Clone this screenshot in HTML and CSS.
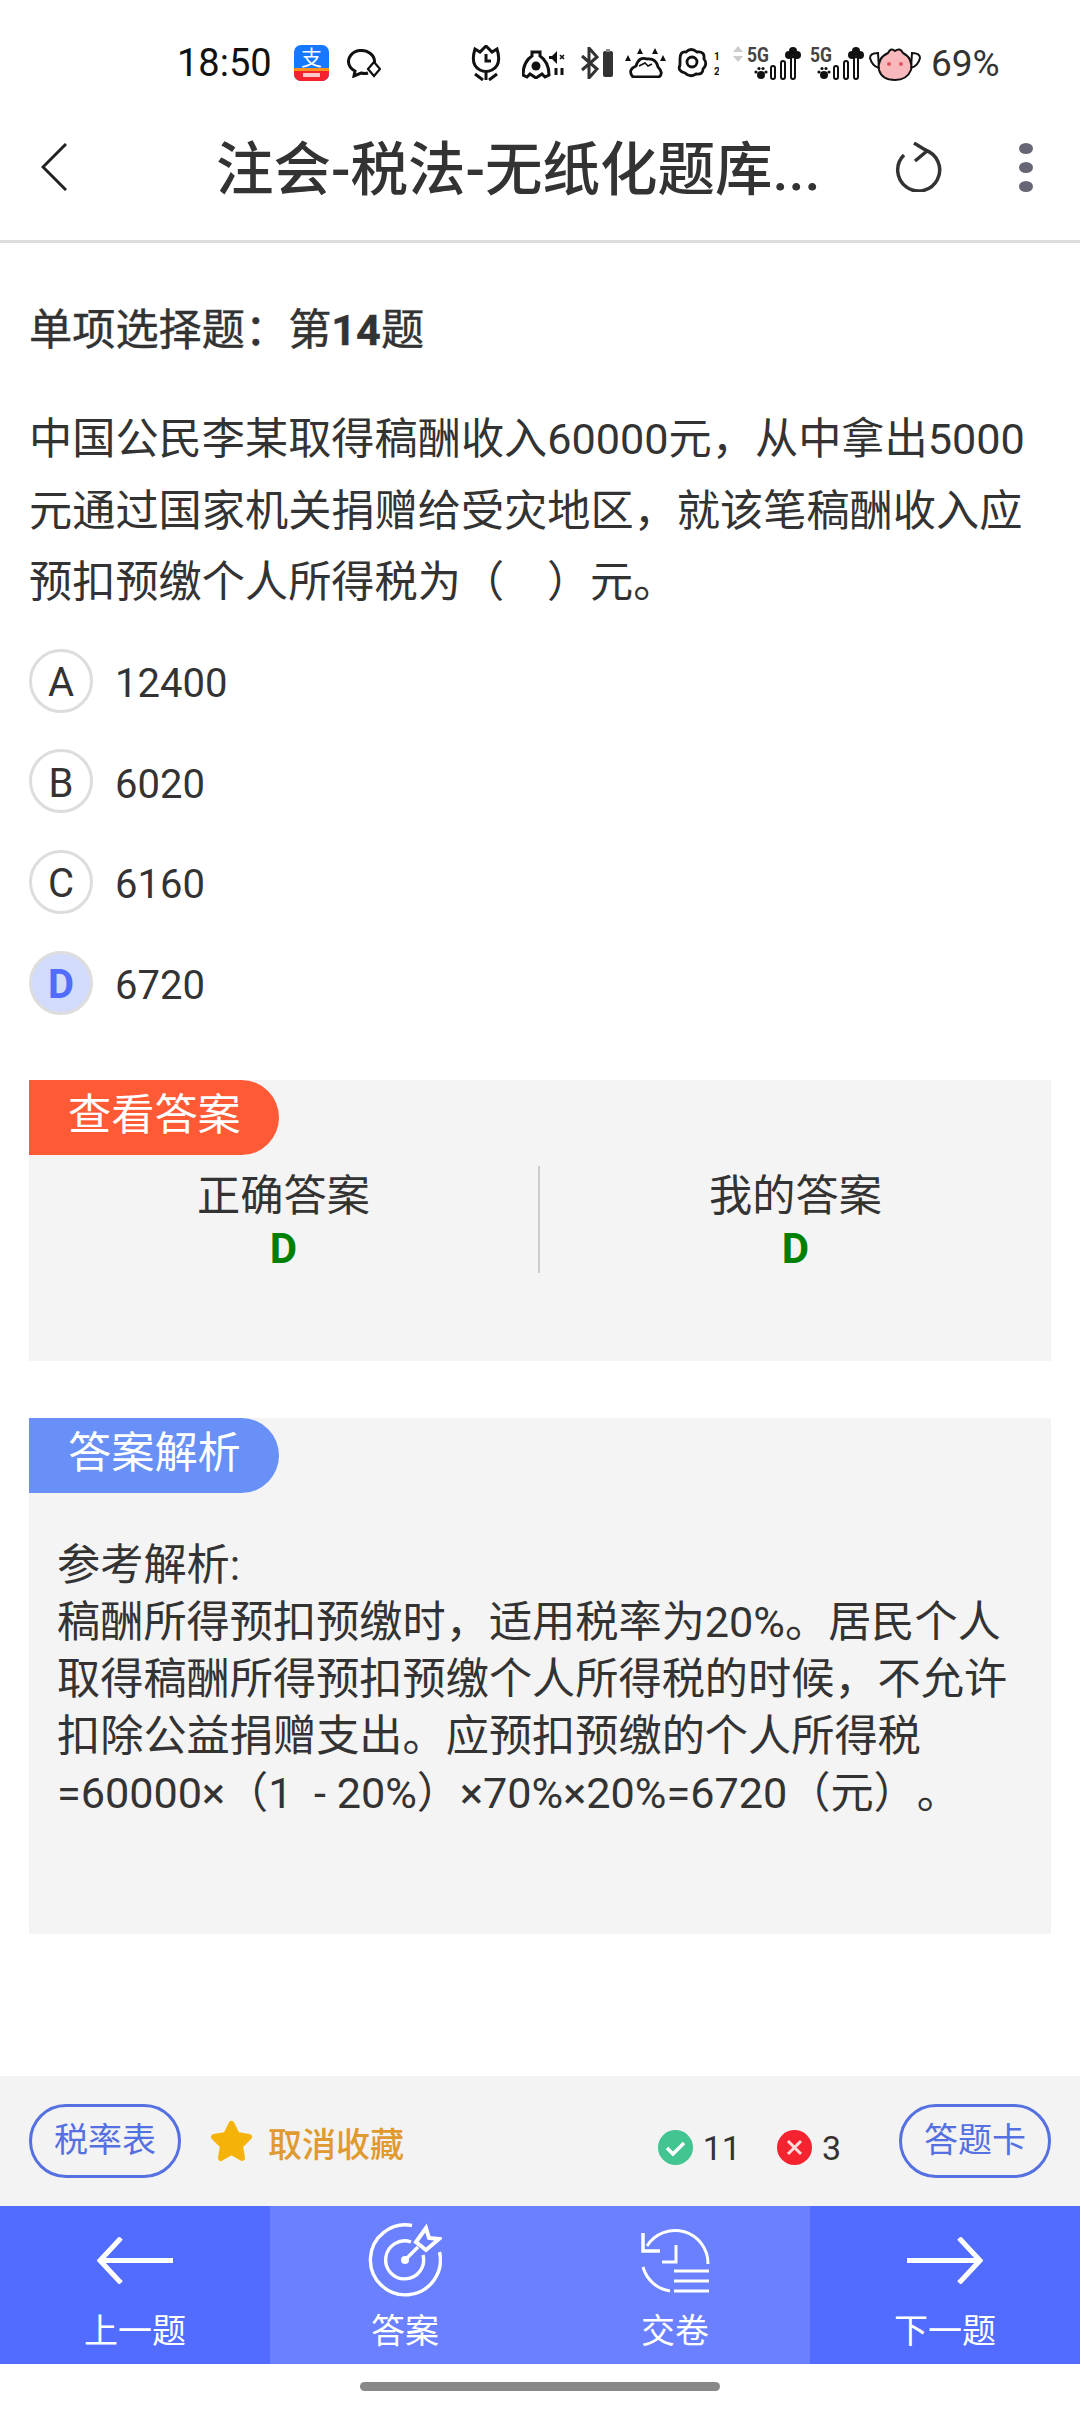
FILE: index.html
```html
<!DOCTYPE html>
<html lang="zh-CN">
<head>
    <meta charset="UTF-8">
    <meta name="viewport" content="width=device-width, initial-scale=1.0">
    <title>注会-税法-无纸化题库</title>
    <link rel="stylesheet" href="styles.css">
</head>
<body>

<div class="statusbar">
    <span class="clock">18:50</span>
    <svg class="ic-alipay" width="35" height="52" viewBox="0 -8 35 52">
        <rect width="35" height="36" rx="7" fill="#1677ff"/>
        <path d="M0 23h35v6a7 7 0 0 1-7 7H7a7 7 0 0 1-7-7z" fill="#f5222d"/>
        <path d="M0 23h35v3H0z" fill="#f7941d"/>
        <text x="17.5" y="20" font-size="21" fill="#fff" text-anchor="middle" font-family="Noto Sans CJK SC">支</text>
        <rect x="9" y="28" width="17" height="4" fill="#ffc9c9"/>
    </svg>
    <svg class="ic-msg" width="34" height="29" viewBox="0 0 34 29" fill="none" stroke="#111" stroke-width="3">
        <path d="M24 20 A13 11 0 1 0 8 22 L7 27 L14 24 Q18 25 21 24"/>
        <path d="M27 13 L33 20 L27 27 L21 20 Z" fill="#fff" stroke-width="2.2"/>
    </svg>
    <svg class="ic-tulip" width="32" height="36" viewBox="0 0 32 36" fill="none" stroke="#111" stroke-width="3">
        <path d="M5 4 L10 7 L16 1 L22 7 L27 4 Q32 20 22 25 Q16 28 10 25 Q0 20 5 4 Z"/>
        <path d="M16 9 V16 H21" stroke-width="3"/>
        <path d="M5 29 L13 35 M27 29 L19 35 M16 27 V35"/>
    </svg>
    <svg class="ic-bag" width="43" height="32" viewBox="0 0 43 32" fill="none" stroke="#111" stroke-width="3">
        <path d="M10 5 H18 L18 9 Q27 15 27 28 L23 30 L20 27 L14 31 L8 27 L5 30 L1 28 Q1 15 10 9 Z"/>
        <circle cx="14" cy="19" r="4.5" fill="#111" stroke="none"/>
        <path d="M27 9 H30 L35 4 V17 L30 12 H27 Z" fill="#111" stroke="none"/>
        <path d="M38 8 L42 12 M42 8 L38 12" stroke-width="1.6"/>
        <path d="M34 21 V28 M40 21 V28" stroke-width="3"/>
    </svg>
    <svg class="ic-bt" width="33" height="32" viewBox="0 0 33 32" fill="none">
        <path d="M2 9 L17 22 L9 31 V1 L17 10 L2 23" stroke="#333" stroke-width="3"/>
        <rect x="23" y="4" width="10" height="26" rx="2" fill="#333"/>
        <rect x="26" y="2" width="4" height="3" fill="#888"/>
    </svg>
    <svg class="ic-cloud" width="41" height="30" viewBox="0 0 41 30" fill="none" stroke="#111" stroke-width="2.8">
        <path d="M8 29 H34 Q39 25 33 19 Q31 10 22 11 Q14 8 11 18 Q2 22 8 29 Z"/>
        <path d="M14 18 L20 15 L23 18 L27 16" stroke-width="1.6"/>
        <path d="M15 0 L18 6 L12 6 Z M30 0 L33 6 L27 6 Z M3 7 L6 13 L0 13 Z M38 7 L41 13 L35 13 Z" fill="#111" stroke="none"/>
    </svg>
    <svg class="ic-flower" width="45" height="44" viewBox="0 -7 45 44" fill="none" stroke="#111" stroke-width="2.8">
        <path d="M6 11 Q6 3 12 4 Q17 -1 23 4 Q31 3 30 11 Q34 16 29 21 Q29 27 22 26 Q16 30 11 25 Q3 23 6 17 Z"/>
        <circle cx="18" cy="14" r="5"/>
        <text x="40" y="12" font-size="10" fill="#111" stroke="none" font-weight="700" font-family="Roboto">1</text>
        <text x="40" y="27" font-size="10" fill="#111" stroke="none" font-weight="700" font-family="Roboto">2</text>
    </svg>
    <svg class="ic-sig1" width="68" height="46" viewBox="0 -6 68 46">
        <path d="M5 0 L10 6 H0 Z M5 16 L10 10 H0 Z" fill="#ccc"/>
        <text x="14" y="16" font-size="21" font-weight="700" fill="#444" font-family="Roboto" textLength="22" lengthAdjust="spacingAndGlyphs">5G</text>
        <g fill="#111"><circle cx="28" cy="29" r="4"/><circle cx="23" cy="26" r="1.6"/><circle cx="26" cy="22.5" r="1.6"/><circle cx="30" cy="22.5" r="1.6"/><circle cx="33" cy="26" r="1.6"/></g>
        <g fill="none" stroke="#111" stroke-width="2"><rect x="38" y="20" width="4" height="13" rx="2"/><rect x="48" y="15" width="4" height="18" rx="2"/><rect x="58" y="11" width="4" height="22" rx="2"/></g>
        <g fill="#111"><circle cx="60" cy="5" r="4"/><circle cx="56" cy="9" r="4"/><circle cx="64" cy="9" r="4"/></g>
    </svg>
    <svg class="ic-sig2" width="54" height="46" viewBox="14 -6 54 46">
        <text x="14" y="16" font-size="21" font-weight="700" fill="#444" font-family="Roboto" textLength="22" lengthAdjust="spacingAndGlyphs">5G</text>
        <g fill="#111"><circle cx="28" cy="29" r="4"/><circle cx="23" cy="26" r="1.6"/><circle cx="26" cy="22.5" r="1.6"/><circle cx="30" cy="22.5" r="1.6"/><circle cx="33" cy="26" r="1.6"/></g>
        <g fill="none" stroke="#111" stroke-width="2"><rect x="38" y="20" width="4" height="13" rx="2"/><rect x="48" y="15" width="4" height="18" rx="2"/><rect x="58" y="11" width="4" height="22" rx="2"/></g>
        <g fill="#111"><circle cx="60" cy="5" r="4"/><circle cx="56" cy="9" r="4"/><circle cx="64" cy="9" r="4"/></g>
    </svg>
    <svg class="ic-pig" width="52" height="35" viewBox="0 0 52 35" stroke="#111" stroke-width="2">
        <path d="M9 7 Q1 7 1 12 Q3 20 10 22 Z M43 7 Q51 7 51 12 Q49 20 42 22 Z" fill="#fff"/>
        <path d="M19 7 Q22 1 26 5 Q31 1 34 7 Q44 12 42 24 Q38 34 26 34 Q13 34 10 24 Q8 12 19 7 Z" fill="#f9b9bc"/>
        <circle cx="20" cy="18" r="2" fill="#e0555f" stroke="none"/>
        <circle cx="32" cy="18" r="2" fill="#e0555f" stroke="none"/>
    </svg>
    <span class="battery">69%</span>
</div>

<div class="topbar">
    <svg class="back" width="26" height="48" viewBox="0 0 26 48" fill="none" stroke="#222" stroke-width="3">
        <path d="M25 1 L2 24 L25 47"/>
    </svg>
    <div class="title">注会-税法-无纸化题库...</div>
    <svg class="refresh" width="47" height="50" viewBox="0 0 47 50" fill="none" stroke="#333" stroke-width="3.5">
        <path d="M30 8 A21 21 0 1 1 9 13"/>
        <path d="M19 1 L32 9 L20 19"/>
    </svg>
    <div class="dots"><i></i><i></i><i></i></div>
</div>

<div class="main">
    <div class="q-type">单项选择题：第<b>14</b>题</div>
    <p class="q-text">中国公民李某取得稿酬收入60000元，从中拿出5000元通过国家机关捐赠给受灾地区，就该笔稿酬收入应预扣预缴个人所得税为（&nbsp;&nbsp;&nbsp;&nbsp;）元。</p>

    <div class="options">
        <div class="option"><span class="letter">A</span><span class="val">12400</span></div>
        <div class="option"><span class="letter">B</span><span class="val">6020</span></div>
        <div class="option"><span class="letter">C</span><span class="val">6160</span></div>
        <div class="option"><span class="letter picked">D</span><span class="val">6720</span></div>
    </div>

    <div class="panel panel-answer">
        <div class="tag tag-red">查看答案</div>
        <div class="answers">
            <div class="answer">正确答案<b>D</b></div>
            <div class="answer">我的答案<b>D</b></div>
        </div>
    </div>

    <div class="panel panel-explain">
        <div class="tag tag-blue">答案解析</div>
        <p class="explain">参考解析:<br>稿酬所得预扣预缴时，适用税率为20%。居民个人取得稿酬所得预扣预缴个人所得税的时候，不允许扣除公益捐赠支出。应预扣预缴的个人所得税=60000×（1&nbsp;&nbsp;-&nbsp;20%）×70%×20%=6720（元）。</p>
    </div>
</div>

<div class="toolbar">
    <div class="chip">税率表</div>
    <svg class="star" width="43" height="42" viewBox="0 0 43 42">
        <path d="M21.5 4 L27 15 L39 17 L30 26 L32 38 L21.5 32 L11 38 L13 26 L4 17 L16 15 Z" fill="#f5b30a" stroke="#f5b30a" stroke-width="6" stroke-linejoin="round"/>
    </svg>
    <span class="fav">取消收藏</span>
    <div class="score">
        <svg width="35" height="35" viewBox="0 0 35 35">
            <circle cx="17.5" cy="17.5" r="17.5" fill="#43c592"/>
            <path d="M9 18 L15 24 L26 13" fill="none" stroke="#fff" stroke-width="3.5"/>
        </svg>
        <span class="num-right">11</span>
        <svg width="35" height="35" viewBox="0 0 35 35">
            <circle cx="17.5" cy="17.5" r="17.5" fill="#f5222f"/>
            <path d="M11 11 L24 24 M24 11 L11 24" fill="none" stroke="#fdd" stroke-width="3"/>
        </svg>
        <span class="num-wrong">3</span>
    </div>
    <div class="chip">答题卡</div>
</div>

<div class="bottomnav">
    <div class="navitem">
        <div class="navicon">
            <svg width="76" height="47" viewBox="0 0 76 47" fill="none" stroke="#fff" stroke-width="5">
                <path d="M76 23.5 H3 M24 1 L3 23.5 L24 46"/>
            </svg>
        </div>
        上一题
    </div>
    <div class="navitem light">
        <div class="navicon">
            <svg width="74" height="74" viewBox="0 0 74 74" fill="none" stroke="#fff" stroke-width="3.4">
                <path d="M44 2.5 A35 35 0 1 0 71.5 29"/>
                <path d="M43 19 A19 19 0 1 0 55 32"/>
                <path d="M37 37 L50 24"/>
                <circle cx="37" cy="37" r="4" fill="#fff" stroke="none"/>
                <path d="M48 19 L58 5 L61 15 L71 16 L58 27 L53 23 Z" stroke-width="4"/>
            </svg>
        </div>
        答案
    </div>
    <div class="navitem light">
        <div class="navicon">
            <svg width="69" height="66" viewBox="0 0 69 66" fill="none" stroke="#fff" stroke-width="3">
                <path d="M6 19 A33 33 0 0 1 67 37"/>
                <path d="M2 40 A33 33 0 0 0 29 64"/>
                <path d="M2 6 V24 H19" stroke-width="3.5"/>
                <path d="M35 18 V35 H21"/>
                <path d="M33 44 H68 M33 54 H68 M33 64 H68"/>
            </svg>
        </div>
        交卷
    </div>
    <div class="navitem">
        <div class="navicon">
            <svg width="76" height="47" viewBox="0 0 76 47" fill="none" stroke="#fff" stroke-width="5">
                <path d="M0 23.5 H73 M52 1 L73 23.5 L52 46"/>
            </svg>
        </div>
        下一题
    </div>
</div>

<div class="homebar"><span></span></div>

</body>
</html>
```

FILE: styles.css
```css
* {
    box-sizing: border-box;
}

body {
    margin: 0;
    width: 1080px;
    height: 2412px;
    display: flex;
    flex-direction: column;
    background-color: #fff;
    color: #333;
    font-family: Roboto, "Noto Sans CJK SC", sans-serif;
    text-spacing-trim: space-all;
}

svg {
    display: block;
    flex: none;
}

/* status bar */
.statusbar {
    height: 95px;
    padding: 31px 0 0 177px;
    display: flex;
    align-items: center;
}

.clock {
    font-size: 38px;
    color: #111;
    width: 94px;
    white-space: nowrap;
}

.ic-alipay { margin-left: 23px; }
.ic-msg { margin-left: 18px; }
.ic-tulip { margin-left: 89px; }
.ic-bag { margin-left: 20px; }
.ic-bt { margin-left: 15px; }
.ic-cloud { margin-left: 12px; }
.ic-flower { margin-left: 8px; }
.ic-sig1 { margin-left: 14px; }
.ic-sig2 { margin-left: 9px; }
.ic-pig { margin-left: 5px; }

.battery {
    margin-left: 10px;
    font-size: 37px;
    color: #333;
}

/* title bar */
.topbar {
    height: 148px;
    padding: 0 47px 1px 41px;
    display: flex;
    align-items: center;
    border-bottom: 3px solid #ddd;
}

.title {
    margin: 0 0 4px 149px;
    font-size: 57.5px;
    font-weight: 500;
    white-space: nowrap;
}

.refresh {
    margin-left: auto;
    margin-right: 77px;
}

.dots {
    display: flex;
    flex-direction: column;
    gap: 8px;
}

.dots i {
    display: block;
    width: 14px;
    height: 11px;
    border-radius: 50%;
    background-color: #667;
}

/* question */
.main {
    flex: 1;
    padding: 58px 29px 0;
}

.q-type {
    font-size: 43.2px;
    line-height: 60px;
    -webkit-text-stroke: 0.4px #333;
}

.q-text {
    margin: 43px 0 30px;
    font-size: 43.2px;
    line-height: 71.5px;
}

.options {
    display: flex;
    flex-direction: column;
    gap: 36.7px;
    height: 366px;
}

.option {
    display: flex;
    align-items: center;
    gap: 22px;
    font-size: 40px;
    height: 64px;
}

.letter {
    width: 64px;
    height: 64px;
    padding-top: 4px;
    border: 3px solid #ddd;
    border-radius: 50%;
    display: flex;
    align-items: center;
    justify-content: center;
}

.val {
    margin-top: 6px;
}

.letter.picked {
    background-color: #d3dbfd;
    color: #516cff;
    font-weight: 700;
}

/* answer panels */
.panel {
    background-color: #f4f4f4;
}

.panel-answer {
    margin-top: 65px;
    height: 281px;
}

.panel-explain {
    margin-top: 57px;
    height: 516px;
}

.tag {
    width: 250px;
    height: 75px;
    padding-left: 39px;
    border-radius: 0 37.5px 37.5px 0;
    font-size: 43.2px;
    line-height: 72px;
    color: #fff;
}

.tag-red { background-color: #ff5a36; }
.tag-blue { background-color: #6890f6; }

.answers {
    margin-top: 11px;
    display: flex;
    height: 107px;
}

.answer {
    padding-top: 4px;
    text-align: center;
    font-size: 43.2px;
    line-height: 53px;
    width: 509px;
}

.answer + .answer {
    flex: 1;
    border-left: 2px solid #ccc;
}

.answer b {
    display: block;
    color: #008000;
    font-size: 42px;
    line-height: 52px;
}

.explain {
    margin: 0;
    padding: 44px 29px 0 28px;
    font-size: 43.2px;
    line-height: 57px;
}

/* bottom */
.toolbar {
    height: 130px;
    padding: 0 29px;
    display: flex;
    align-items: center;
    background-color: #f3f3f3;
}

.chip {
    width: 152px;
    height: 74px;
    border: 3px solid #5570e0;
    border-radius: 37px;
    font-size: 34px;
    line-height: 66px;
    text-align: center;
    color: #5570e0;
}

.star {
    margin-left: 29px;
}

.fav {
    margin: 3px 0 0 15px;
    font-size: 34px;
    color: #e09a30;
    font-weight: 500;
}

.score {
    margin-left: auto;
    margin-right: 58px;
    padding-top: 13px;
    display: flex;
    align-items: center;
    font-size: 34px;
}

.num-right {
    margin: 0 36px 0 10px;
}

.num-wrong {
    margin-left: 10px;
}

.bottomnav {
    height: 158px;
    display: flex;
    background-color: #516cff;
}

.navitem {
    width: 270px;
    padding-top: 17px;
    display: flex;
    flex-direction: column;
    align-items: center;
    color: #fff;
    font-size: 34px;
    line-height: 40px;
}

.navitem.light {
    background-color: #6a80ff;
}

.navicon {
    height: 74px;
    margin-bottom: 14px;
    display: flex;
    align-items: center;
}

.homebar {
    height: 48px;
    padding-top: 18px;
    display: flex;
    justify-content: center;
}

.homebar span {
    width: 360px;
    height: 9px;
    border-radius: 5px;
    background-color: #888;
}
```
